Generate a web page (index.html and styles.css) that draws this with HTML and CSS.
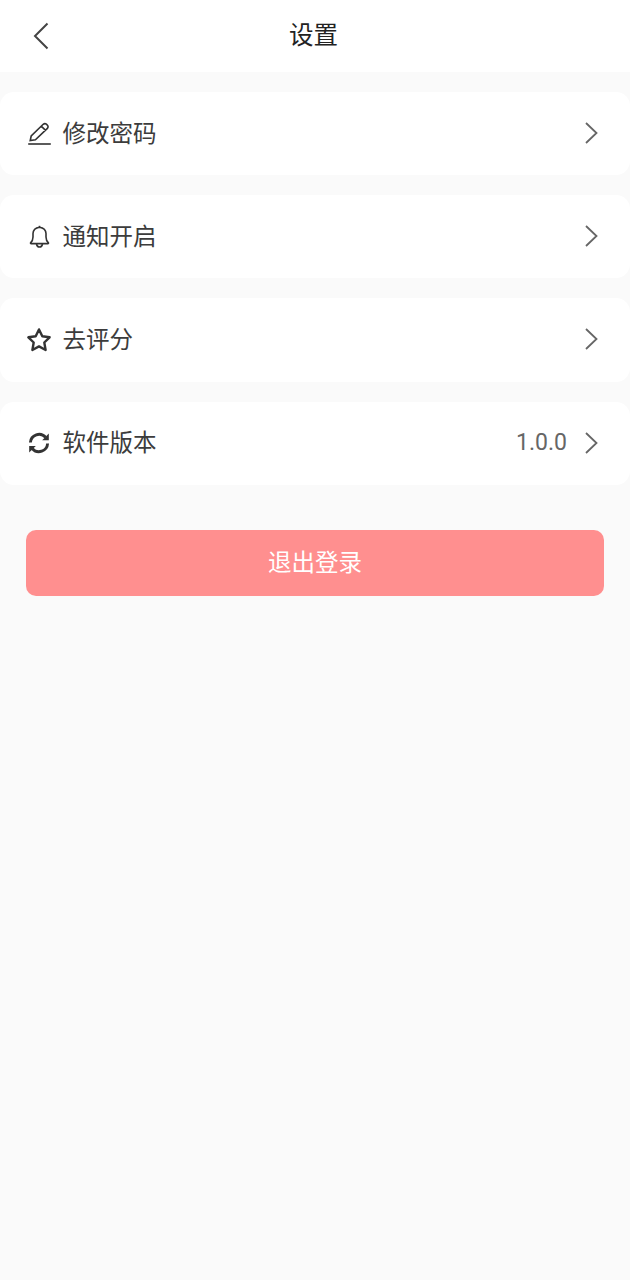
FILE: index.html
```html
<!DOCTYPE html>
<html lang="zh-CN">

<head>
    <meta charset="UTF-8">
    <meta name="viewport" content="width=device-width, initial-scale=1.0">
    <title>设置</title>
    <link rel="stylesheet" href="styles.css">
</head>

<body>
    <div class="header">
        <svg class="back-icon" width="16" height="28" viewBox="0 0 16 28">
            <path d="M14.5 1.5 L2 14 L14.5 26.5" />
        </svg>
        <span class="title">设置</span>
    </div>

    <div class="list">
        <div class="row">
            <svg class="row-icon" width="24" height="24" viewBox="0 0 24 24">
                <path class="thin" d="M1.2 22 H23.8" />
                <path class="thin" d="M3.2 18.6 L4.2 14 L16.2 2.3 Q17.8 1 19.4 2.2 L20.6 3.4 Q21.6 5 20.4 6.4 L8.4 17.8 Z M14.2 4.2 L18.6 8.4" />
            </svg>
            <span class="row-label">修改密码</span>
            <svg class="arrow" width="14" height="24" viewBox="0 0 14 24">
                <path d="M2 2 L12.5 12 L2 22" />
            </svg>
        </div>
        <div class="row">
            <svg class="row-icon" width="24" height="24" viewBox="0 0 24 24">
                <path class="thin" d="M3.6 17.8 Q6 15.5 6 12 V8.5 Q6.2 3.2 12.5 2.2 Q18.8 3.2 19 8.5 V12 Q19 15.5 21.4 17.8 Q21.7 18.6 20.9 18.6 H4.1 Q3.3 18.6 3.6 17.8 Z" />
                <path class="thin" d="M9.5 19 Q10 22 12.5 22 Q15 22 15.5 19" />
                <path class="thin" d="M12.5 0.8 V2.2" />
            </svg>
            <span class="row-label">通知开启</span>
            <svg class="arrow" width="14" height="24" viewBox="0 0 14 24">
                <path d="M2 2 L12.5 12 L2 22" />
            </svg>
        </div>
        <div class="row">
            <svg class="row-icon" width="24" height="24" viewBox="0 0 24 24">
                <path class="bold" d="M12 1.4 L15.3 8.2 L22.6 9.3 L17.3 14.5 L18.6 22 L12 18.4 L5.4 22 L6.7 14.5 L1.4 9.3 L8.7 8.2 Z" />
            </svg>
            <span class="row-label">去评分</span>
            <svg class="arrow" width="14" height="24" viewBox="0 0 14 24">
                <path d="M2 2 L12.5 12 L2 22" />
            </svg>
        </div>
        <div class="row">
            <svg class="row-icon" width="24" height="24" viewBox="0 0 24 24">
                <path class="heavy" d="M3.4 11.5 A8.7 8.7 0 0 1 18.6 6.3" />
                <path class="heavy" d="M20.6 12.5 A8.7 8.7 0 0 1 5.4 17.7" />
                <path class="solid" d="M21.8 2.6 V9.2 H15.2 Z" />
                <path class="solid" d="M2.2 21.6 V15 H8.8 Z" />
            </svg>
            <span class="row-label">软件版本</span>
            <span class="row-value">1.0.0</span>
            <svg class="arrow" width="14" height="24" viewBox="0 0 14 24">
                <path d="M2 2 L12.5 12 L2 22" />
            </svg>
        </div>
    </div>

    <div class="logout"><span>退出登录</span></div>
</body>

</html>
```

FILE: styles.css
```css
* {
    margin: 0;
    padding: 0;
    box-sizing: border-box;
    font-family: "Roboto", "Noto Sans CJK SC", sans-serif;
}

body {
    background-color: #fafafa;
    width: 630px;
    height: 1280px;
    overflow: hidden;
    color: #333;
}

.header {
    position: relative;
    height: 72px;
    background: white;
    display: flex;
    align-items: center;
    justify-content: center;
}

.back-icon {
    position: absolute;
    left: 33px;
    top: 22px;
}

.back-icon path {
    fill: none;
    stroke: #444;
    stroke-width: 2;
}

.title {
    font-size: 24.5px;
    line-height: 28px;
    color: #222;
    padding-right: 3px;
}

.list {
    display: flex;
    flex-direction: column;
    gap: 20px;
    padding-top: 20px;
}

.row {
    height: 83.2px;
    background: white;
    border-radius: 14px;
    display: flex;
    align-items: center;
    padding: 0 32px 0 27px;
}

.row-icon {
    flex-shrink: 0;
    margin-right: 12px;
}

.row-icon path {
    fill: none;
    stroke: #333;
}

.row-icon .thin {
    stroke-width: 1.6;
}

.row-icon .bold {
    stroke-width: 2.4;
    stroke-linejoin: round;
}

.row-icon .heavy {
    stroke-width: 2.9;
}

.row-icon .solid {
    fill: #333;
    stroke: none;
}

.row-label {
    flex: 1;
    font-size: 23.5px;
    line-height: 28px;
    margin-left: -0.5px;
    color: #3c3c3c;
}

.row-value {
    font-size: 23px;
    line-height: 28px;
    color: #666;
    margin-right: 17px;
}

.arrow {
    flex-shrink: 0;
    margin-top: -1px;
}

.arrow path {
    fill: none;
    stroke: #666;
    stroke-width: 1.8;
}

.logout {
    margin: 45px 26px 0;
    height: 66px;
    background: #ff8f8f;
    border-radius: 10px;
    color: white;
    font-size: 23.5px;
    line-height: 28px;
    display: flex;
    align-items: center;
    justify-content: center;
}
```
